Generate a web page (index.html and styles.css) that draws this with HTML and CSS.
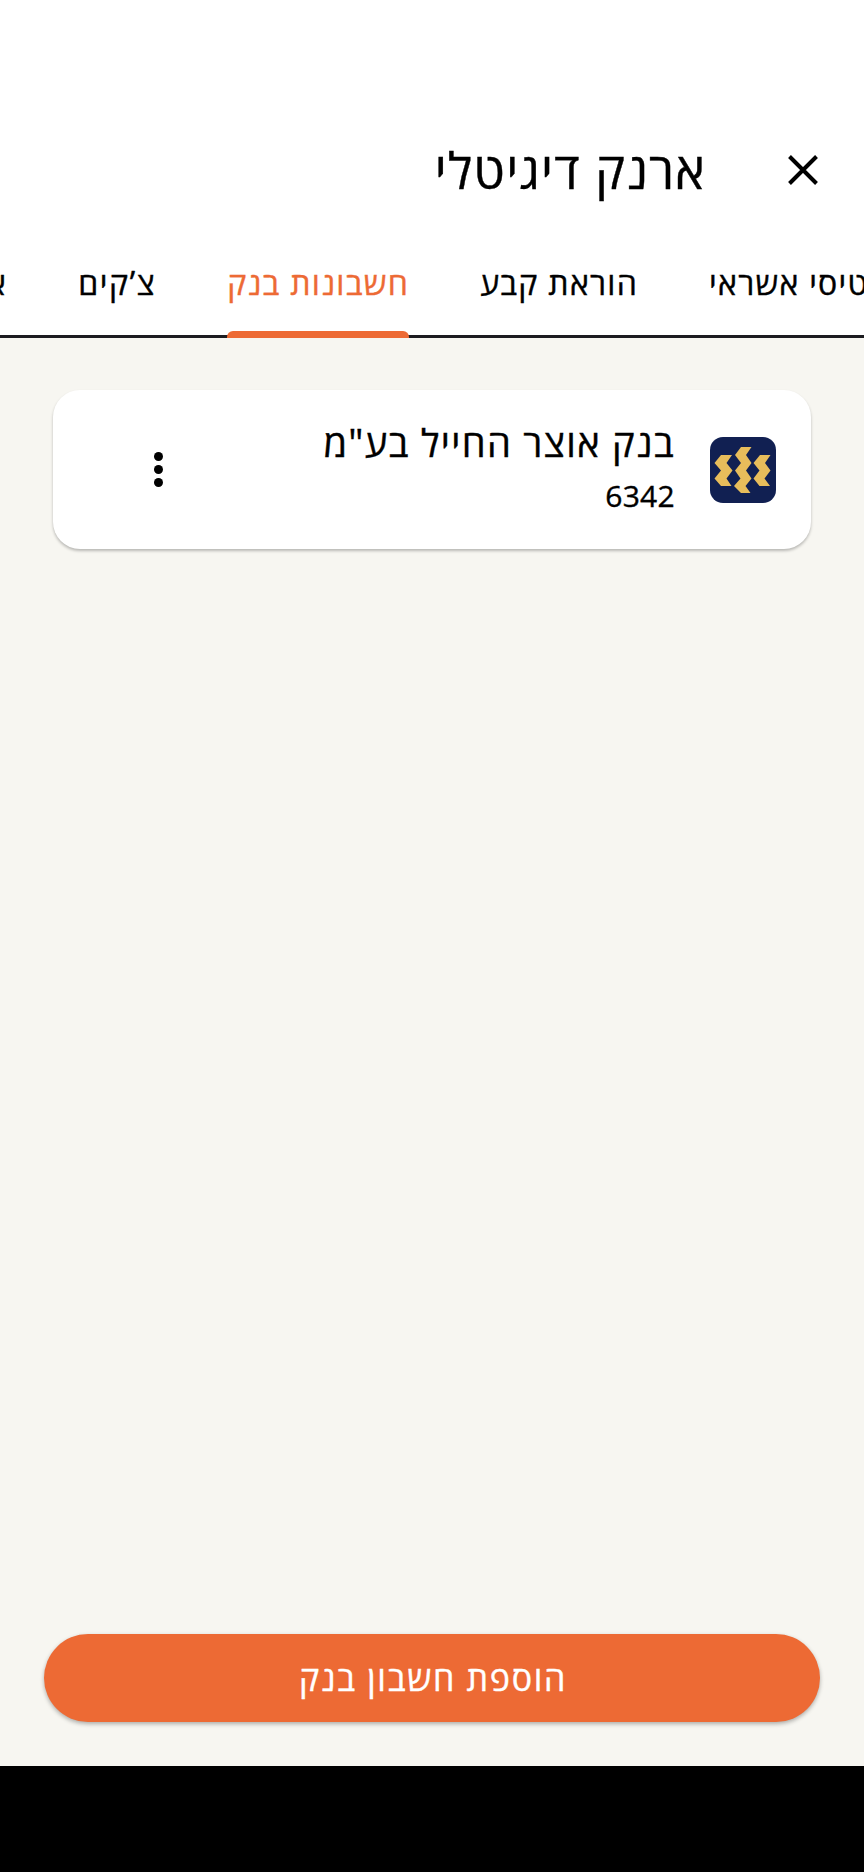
FILE: index.html
```html
<!DOCTYPE html>
<html lang="he" dir="rtl">
<head>
    <meta charset="UTF-8">
    <meta name="viewport" content="width=device-width, initial-scale=1.0">
    <title>ארנק דיגיטלי</title>
    <link rel="stylesheet" href="styles.css">
</head>
<body>
    <div class="screen">
        <header class="header">
            <button class="close" aria-label="סגירה">
                <svg width="30" height="30" viewBox="0 0 30 30">
                    <path d="M1.5 1.5L28.5 28.5M28.5 1.5L1.5 28.5" stroke="#000" stroke-width="4" fill="none"/>
                </svg>
            </button>
            <h1 class="title">ארנק דיגיטלי</h1>
        </header>

        <nav class="tabs">
            <a class="tab">כרטיסי אשראי</a>
            <a class="tab">הוראת קבע</a>
            <a class="tab active">חשבונות בנק</a>
            <a class="tab checks">צ’קים</a>
            <a class="tab">א</a>
        </nav>

        <main class="content">
            <div class="card">
                <svg class="logo" width="66" height="66" viewBox="0 0 66 66">
                    <rect width="66" height="66" rx="13" fill="#112052"/>
                    <g fill="#e8bd5b">
                        <path d="M11 18H22L16.5 26L22.5 33.500L16.5 41.500L21.5 49H11L4.5 41.500L11 33.500L4.5 26Z"/>
                        <path d="M31 10H41.5L36 18L41.5 26L36 33.500L41.5 41.500L35.5 49L40.5 56H31L24 49L30.5 41.500L25 33.500L31 26L25 18Z"/>
                        <path d="M50 18H60.500L55 26L60.500 33.500L54.500 41.500L60 49H49.5L43.500 41.500L49.5 33.500L43.5 26Z"/>
                    </g>
                </svg>
                <div class="info">
                    <div class="name">בנק אוצר החייל בע"מ</div>
                    <div class="number">6342</div>
                </div>
                <button class="menu" aria-label="אפשרויות">
                    <span class="dot"></span>
                    <span class="dot"></span>
                    <span class="dot"></span>
                </button>
            </div>
            <button class="add">הוספת חשבון בנק</button>
        </main>
        <div class="bottom-bar"></div>
    </div>
</body>
</html>
```

FILE: styles.css
```css
* {
    margin: 0;
    padding: 0;
    box-sizing: border-box;
    font-family: "Open Sans", "Noto Sans", sans-serif;
}

body {
    background: #f7f6f1;
    -webkit-text-stroke: 0.4px;
}

button {
    border: none;
    background: none;
    cursor: pointer;
}

.screen {
    height: 1872px;
    display: flex;
    flex-direction: column;
    overflow: hidden;
}

.header {
    height: 240px;
    padding: 130px 46px 0;
    display: flex;
    align-items: flex-start;
    gap: 82px;
    background: white;
}

.close {
    display: flex;
    padding-top: 25px;
}

.title {
    font-size: 50px;
    font-weight: 400;
    line-height: 80px;
    letter-spacing: 1.3px;
    white-space: nowrap;
}

.tabs {
    height: 98px;
    display: flex;
    gap: 71px;
    margin-right: -39px;
    background: white;
    border-bottom: 3px solid #1c1c20;
}

.tab {
    flex: none;
    height: 98px;
    font-size: 32px;
    line-height: 86px;
    letter-spacing: 1.3px;
    white-space: nowrap;
}

.checks {
    letter-spacing: 1.6px;
}

.active {
    position: relative;
    color: #ed6a34;
}

.active::after {
    content: "";
    position: absolute;
    left: 0;
    right: 0;
    bottom: 0;
    height: 7px;
    background: #ed6a34;
    border-radius: 6px 6px 0 0;
}

.content {
    flex: 1;
    padding: 52px 44px 44px;
    display: flex;
    flex-direction: column;
    justify-content: space-between;
}

.card {
    height: 159px;
    margin: 0 9px;
    padding: 0 35px 0 101px;
    display: flex;
    align-items: center;
    background: white;
    border-radius: 27px;
    box-shadow: 0 2px 3px rgba(0,0,0,0.25);
}

.info {
    flex: 1;
    margin-right: 35px;
}

.name {
    font-size: 38px;
    line-height: 53px;
    letter-spacing: 1.35px;
}

.number {
    font-size: 30px;
    font-weight: 500;
    line-height: 54px;
    letter-spacing: 0.3px;
}

.menu {
    display: flex;
    flex-direction: column;
    gap: 4px;
}

.dot {
    width: 9px;
    height: 9px;
    border-radius: 50%;
    background: #000;
}

.add {
    height: 88px;
    padding-left: 2px;
    background: #ed6a34;
    color: white;
    font-size: 34px;
    letter-spacing: 1.7px;
    border-radius: 44px;
    box-shadow: 0 2px 4px rgba(0,0,0,0.3);
}

.bottom-bar {
    height: 106px;
    background: #000;
}
```
